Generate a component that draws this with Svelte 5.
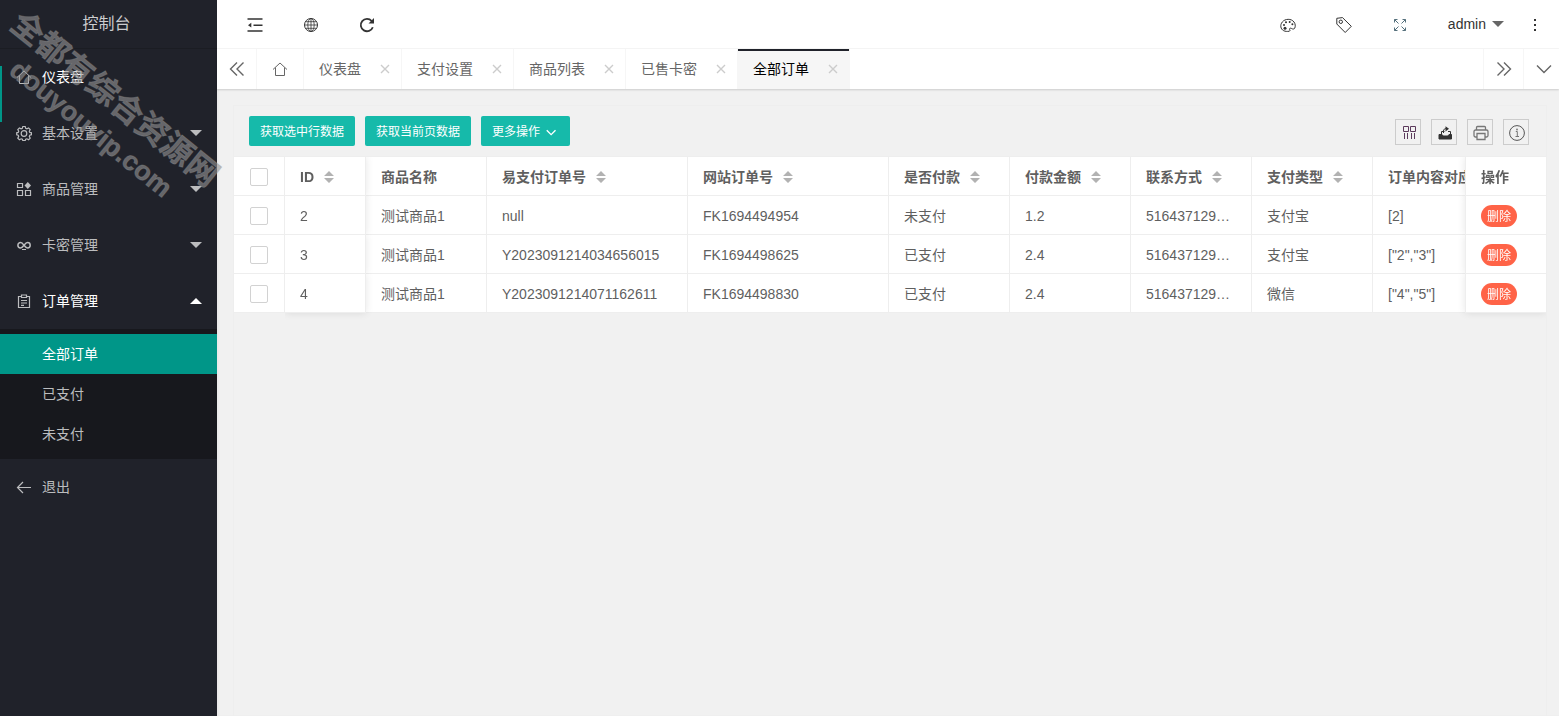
<script>
  // Navigation
  const menus = [
    { name: '仪表盘', icon: 'home', current: true },
    { name: '基本设置', icon: 'gear', more: true },
    { name: '商品管理', icon: 'apps', more: true },
    { name: '卡密管理', icon: 'link', more: true },
    { name: '订单管理', icon: 'form', more: true, children: ['全部订单', '已支付', '未支付'] },
    { name: '退出', icon: 'back' }
  ];

  const tabs = ['仪表盘', '支付设置', '商品列表', '已售卡密', '全部订单'];

  // Table
  const columns = [
    { title: '商品名称', key: 'goods' },
    { title: '易支付订单号', key: 'payNo', sort: true },
    { title: '网站订单号', key: 'siteNo', sort: true },
    { title: '是否付款', key: 'paid', sort: true },
    { title: '付款金额', key: 'amount', sort: true },
    { title: '联系方式', key: 'contact', sort: true },
    { title: '支付类型', key: 'type', sort: true },
    { title: '订单内容对应ID', key: 'content' }
  ];

  const orders = [
    { id: 2, goods: '测试商品1', payNo: 'null', siteNo: 'FK1694494954', paid: '未支付', amount: '1.2', contact: '516437129@qq.com', type: '支付宝', content: '[2]' },
    { id: 3, goods: '测试商品1', payNo: 'Y2023091214034656015', siteNo: 'FK1694498625', paid: '已支付', amount: '2.4', contact: '516437129@qq.com', type: '支付宝', content: '["2","3"]' },
    { id: 4, goods: '测试商品1', payNo: 'Y2023091214071162611', siteNo: 'FK1694498830', paid: '已支付', amount: '2.4', contact: '516437129@qq.com', type: '微信', content: '["4","5"]' }
  ];

  let activeTab = $state('全部订单');
  let activeChild = $state('全部订单');
  let checked = $state([]);

  function toggleAll(e) {
    checked = e.target.checked ? orders.map((o) => o.id) : [];
  }
</script>

{#snippet icon(name)}
  <svg class="icon" viewBox="0 0 16 16" fill="none" stroke="currentColor" aria-hidden="true">
    {#if name === 'home'}
      <path d="M1 8.500 8 2 15 8.500M3.500 6.500v8h9v-8" />
    {:else if name === 'gear'}
      <circle cx="8" cy="8.500" r="2.800" stroke-width="1.200" />
      <path d="M6.800 1.500h2.400l.5 1.800 1.200.5 1.700-.9 1.600 1.700-.9 1.600.5 1.200 1.700.4v1.900l-1.700.5-.5 1.200.9 1.700-1.600 1.600-1.700-.9-1.200.5-.5 1.200H6.800l-.5-1.200-1.200-.5-1.700.9-1.600-1.600.9-1.700-.5-1.200L.7 9.700V7.800l1.500-.4.5-1.200-.9-1.600 1.600-1.700 1.700.9 1.200-.5z" stroke-width="1.200" />
    {:else if name === 'apps'}
      <path d="M1.500 2.500h5v4h-5zM1.500 9.500h5v5h-5zM9.500 9.500h5v5h-5z" stroke-width="1.200" />
      <path d="M11.800 1 15 4.500 11.800 8 8.500 4.500z" fill="currentColor" stroke="none" />
    {:else if name === 'link'}
      <path d="M8 8.300C6.800 6.500 6 5.500 4.600 5.500a2.700 2.700 0 0 0 0 5.400c1.400 0 2.200-1 3.400-2.600s2-2.800 3.500-2.800a2.700 2.700 0 0 1 0 5.400c-1.500 0-2.300-1-3.500-2.600z" stroke-width="1.500" />
      <path d="M6 12.500h4" />
    {:else if name === 'form'}
      <path d="M5 3.500H2.500v11h11v-11H11M5.500 2h5v2.500h-5zM5 7.500h6M5 10h6M5 12.300h3" stroke-width="1.200" />
    {:else if name === 'back'}
      <path d="M15 8.500H1.500M7 3 1.500 8.500 7 14" stroke-width="1.200" />
    {:else if name === 'shrink'}
      <path d="M.5 2h15M6.500 8.200h9M.5 14h15" stroke-width="1.600" />
      <path d="M1 8.200 4.300 5.800v4.800z" fill="currentColor" stroke="none" />
    {:else if name === 'globe'}
      <circle cx="8" cy="8" r="6.500" />
      <ellipse cx="8" cy="8" rx="3.200" ry="6.500" stroke-width=".8" />
      <path d="M8 1.500v13M1.500 8h13M2.500 4.700h11M2.500 11.300h11" stroke-width=".8" />
    {:else if name === 'refresh'}
      <path d="M13.800 10.200A6.200 6.200 0 1 1 12.700 4" stroke-width="1.800" />
      <path d="M15 1v5.500H9.500z" fill="currentColor" stroke="none" />
    {:else if name === 'theme'}
      <path d="M3.700 13.700C.5 12.200-.2 8 2.300 5 5 1.600 11.300 1.300 14 5c1.500 2 1.500 4.300.8 6-.6 1.300-2 1.300-3.200.5-1.500-.9-2.800.2-1.800 1.400.4.600 0 1.300-.8 1.400-1.800.2-3.700.2-5.300-.6z" />
      <g fill="currentColor" stroke="none">
        <circle cx="4" cy="8" r="1" /><circle cx="6" cy="5.200" r="1" /><circle cx="9.700" cy="4.900" r="1" /><circle cx="12.400" cy="7.300" r="1" /><circle cx="5" cy="11.200" r="1.500" />
      </g>
    {:else if name === 'note'}
      <path d="M.8 1.300 6.500.6 15.300 9.300 9.200 15.500.8 7z" />
      <circle cx="4.800" cy="4.800" r="1.700" />
    {:else if name === 'full'}
      <path d="M2.500 5.500v-3h3M2.500 2.500l4 4M10.500 2.500h3v3M13.500 2.500l-4 4M2.500 10.500v3h3M2.500 13.500l4-4M10.500 13.500h3v-3M13.500 13.500l-4-4" stroke="#55707c" />
    {:else if name === 'dots'}
      <path d="M7 2h2v2H7zM7 7h2v2H7zM7 12h2v2H7z" fill="currentColor" stroke="none" />
    {:else if name === 'prev'}
      <path d="M8 1.500 1.500 8 8 14.500M14.500 1.500 8 8l6.500 6.500" stroke-width="1.400" />
    {:else if name === 'next'}
      <path d="M1.500 1.500 8 8l-6.500 6.500M8 1.500 14.500 8 8 14.500" stroke-width="1.400" />
    {:else if name === 'down'}
      <path d="m1 4.500 7 7 7-7" stroke-width="1.400" />
    {:else if name === 'more'}
      <path d="M2 6l5 5 5-5" stroke-width="1.600" />
    {:else if name === 'close'}
      <path d="m4 4 8 8M12 4l-8 8" stroke-width="1.400" />
    {:else if name === 'cols'}
      <path d="M2.500 1.500h5v5h-5zM9.500 1.500h5v5h-5zM3.500 8v6M6.500 8v6M10.500 8v6M13.500 8v6" stroke="#5c3a5c" />
    {:else if name === 'export'}
      <path d="M2 9.500h3l1 1.500h5l1-1.500h2.500V14H2z" fill="currentColor" />
      <path d="M4.500 9V6.500h3M11 6.500h2.500V10M6.500 8V6c0-1.500 1-2.500 3-2.500" />
      <path d="M8.500 1.200 12 3.800 8.500 6.400z" fill="currentColor" stroke="none" />
    {:else if name === 'print'}
      <g stroke="#777">
        <path d="M3.500 5V2.500c0-.6.4-1 1-1h7c.6 0 1 .4 1 1V5M4 12H2.500A1.500 1.500 0 0 1 1 10.500v-4A1.500 1.500 0 0 1 2.500 5h11A1.500 1.500 0 0 1 15 6.500v4a1.500 1.500 0 0 1-1.500 1.500H12M4 8.500h8v6H4z" stroke-width="1.300" />
      </g>
    {:else if name === 'info'}
      <circle cx="8" cy="8" r="7.400" stroke="#555" />
      <path d="M6.800 6.500h1.500V11M6.500 11.500h3.500" stroke="#777" />
      <circle cx="8" cy="4.500" r=".9" fill="#777" stroke="none" />
    {/if}
  </svg>
{/snippet}

<div class="layout">
  <aside class="side">
    <div class="logo">控制台</div>
    <nav>
      {#each menus as item}
        <a href="#menu" class="menu" class:light={item.current} class:open={item.children}>
          {@render icon(item.icon)}
          <span>{item.name}</span>
          {#if item.more}<i class="caret"></i>{/if}
        </a>
        {#if item.children}
          <div class="sub">
            {#each item.children as child}
              <a href="#orders" class:active={activeChild === child} onclick={() => (activeChild = child)}>{child}</a>
            {/each}
          </div>
        {/if}
      {/each}
      <span class="bar"></span>
    </nav>
  </aside>

  <div class="main">
    <header class="header">
      <button aria-label="侧边伸缩">{@render icon('shrink')}</button>
      <button aria-label="前台">{@render icon('globe')}</button>
      <button aria-label="刷新">{@render icon('refresh')}</button>
      <span class="space"></span>
      <button aria-label="主题">{@render icon('theme')}</button>
      <button aria-label="便签">{@render icon('note')}</button>
      <button aria-label="全屏">{@render icon('full')}</button>
      <button class="user">admin<i class="caret"></i></button>
      <button class="dots" aria-label="更多">{@render icon('dots')}</button>
    </header>

    <div class="tabs">
      <button class="ctrl" aria-label="向左">{@render icon('prev')}</button>
      <button class="tab-home" aria-label="主页">{@render icon('home')}</button>
      {#each tabs as tab}
        <div class="tab" class:active={activeTab === tab}>
          <button class="tab-name" onclick={() => (activeTab = tab)}>{tab}</button>
          <button class="tab-close" aria-label="关闭{tab}">{@render icon('close')}</button>
        </div>
      {/each}
      <span class="space"></span>
      <button class="ctrl right" aria-label="向右">{@render icon('next')}</button>
      <button class="ctrl right last" aria-label="标签操作">{@render icon('down')}</button>
    </div>

    <main class="content">
      <div class="card">
        <div class="toolbar">
          <button class="btn">获取选中行数据</button>
          <button class="btn">获取当前页数据</button>
          <button class="btn">更多操作 {@render icon('more')}</button>
          <span class="space"></span>
          <div class="tools">
            <button aria-label="筛选列">{@render icon('cols')}</button>
            <button aria-label="导出">{@render icon('export')}</button>
            <button aria-label="打印">{@render icon('print')}</button>
            <button aria-label="提示">{@render icon('info')}</button>
          </div>
        </div>

        <div class="table-box">
          <table>
            <colgroup>
              <col class="w-check" /><col class="w-id" /><col class="w-normal" /><col class="w-wide" /><col class="w-wide" />
              <col class="w-normal" /><col class="w-normal" /><col class="w-normal" /><col class="w-normal" /><col class="w-wide" /><col class="w-action" />
            </colgroup>
            <thead>
              <tr>
                <th class="check"><input type="checkbox" aria-label="全选" checked={checked.length === orders.length} onchange={toggleAll} /></th>
                <th class="id">ID<span class="sort"></span></th>
                {#each columns as col}
                  <th>{col.title}{#if col.sort}<span class="sort"></span>{/if}</th>
                {/each}
                <th class="action">操作</th>
              </tr>
            </thead>
            <tbody>
              {#each orders as order}
                <tr>
                  <td class="check"><input type="checkbox" aria-label="选择 {order.id}" value={order.id} bind:group={checked} /></td>
                  <td class="id">{order.id}</td>
                  {#each columns as col}
                    <td>{order[col.key]}</td>
                  {/each}
                  <td class="action"><button class="del">删除</button></td>
                </tr>
              {/each}
            </tbody>
          </table>
        </div>
      </div>
    </main>
  </div>

  <div class="watermark">全都有综合资源网<br /><span>douyouvip.com</span></div>
</div>

<style>
  :global(body) { background: #f1f1f1; }
  .layout { position: relative; display: flex; min-height: 100vh; overflow: hidden; font: 14px/24px "Liberation Sans", "Noto Sans CJK SC", sans-serif; color: #333; }
  button { margin: 0; padding: 0; border: none; background: none; font: inherit; color: inherit; cursor: pointer; }
  a { text-decoration: none; }
  .icon { display: block; flex: none; width: 16px; height: 16px; }
  .space { flex: 1; }
  .caret { width: 0; height: 0; border: 6px solid transparent; border-top-color: currentColor; border-bottom: none; }

  /* Sidebar */
  .side { flex: none; width: 217px; background: #20222a; color: #bcbdbf; }
  .logo { box-sizing: border-box; height: 49px; line-height: 48px; border-bottom: 1px solid #1b1d23; padding-right: 4px; text-align: center; font-size: 16px; color: #cccdcf; }
  nav { position: relative; }
  .menu { display: flex; align-items: center; height: 56px; padding: 0 15px 0 16px; color: #bcbdbf; }
  .menu .icon { margin-right: 10px; }
  .menu .caret { margin-left: auto; }
  .menu.light span, .menu.open span { color: #fff; }
  .menu.open .caret { border-top: none; border-bottom: 6px solid #fff; }
  .bar { position: absolute; left: 0; top: 17px; width: 2px; height: 56px; background: #009688; }
  .sub { padding: 5px 0; background: #17181d; }
  .sub a { display: block; height: 40px; line-height: 40px; padding-left: 42px; color: #bcbdbf; }
  .sub a.active { background: #009688; color: #fff; }

  /* Header and tabs */
  .main { flex: 1; min-width: 0; display: flex; flex-direction: column; }
  .header { display: flex; align-items: center; height: 48px; padding: 0 8px 0 10px; background: #fff; border-bottom: 1px solid #f6f6f6; }
  .header button { display: flex; align-items: center; height: 48px; padding: 0 20px; }
  .header .icon { margin-top: 2px; }
  .header .user { padding-right: 15px; gap: 6px; }
  .user .caret { color: #666; }
  .header .dots { padding: 0 8px; }
  .tabs { display: flex; height: 40px; background: #fff; color: #666; box-shadow: 0 1px 2px rgba(0, 0, 0, 0.15); }
  .ctrl { width: 40px; padding: 0 12px; border-right: 1px solid #f6f6f6; }
  .ctrl.right { border-right: none; border-left: 1px solid #f6f6f6; }
  .ctrl.last { width: 36px; padding-right: 7px; }
  .tab-home { padding: 0 15px; border-right: 1px solid #f6f6f6; }
  .tab { display: flex; align-items: center; border-right: 1px solid #f6f6f6; }
  .tab-name { height: 40px; padding-left: 15px; }
  .tab-close { margin: 0 8px 0 16px; color: #ccc; }
  .tab.active { background: #f6f6f6; color: #000; box-shadow: inset 0 2px #20222a; }

  /* Content */
  .content { flex: 1; display: flex; padding: 16px 12px 0 16px; box-shadow: inset 2px 0 2px rgba(0, 0, 0, 0.03); }
  .card { flex: 1; min-width: 0; border: 1px solid #eee; border-bottom: none; }
  .toolbar { display: flex; align-items: center; gap: 10px; height: 50px; padding: 0 17px 0 15px; }
  .btn { display: flex; align-items: center; gap: 5px; height: 30px; padding: 2px 11px 0; border-radius: 2px; background: #16baaa; color: #fff; font-size: 12px; }
  .btn .icon { width: 14px; height: 14px; }
  .tools { display: flex; gap: 10px; padding-top: 2px; }
  .tools button { width: 26px; height: 26px; padding: 2px 4px 0 5px; border: 1px solid #ccc; }

  .table-box { overflow: hidden; padding-bottom: 8px; color: #5f5f5f; }
  table { table-layout: fixed; width: 1421px; border-collapse: separate; border-spacing: 0; border-top: 1px solid #eee; }
  .w-check { width: 51px; }
  .w-id { width: 81px; }
  .w-normal { width: 121px; }
  .w-wide { width: 201px; }
  .w-action { width: 81px; }
  th, td { box-sizing: border-box; height: 39px; padding: 2px 14px 0 15px; background: #fff; border: solid #eee; border-width: 0 1px 1px 0; text-align: left; white-space: nowrap; overflow: hidden; text-overflow: ellipsis; }
  th { font-weight: 700; text-overflow: clip; }
  .check, .id, .action { position: sticky; z-index: 1; overflow: visible; }
  .check { left: 0; }
  .id { left: 51px; box-shadow: 0 0 8px rgba(0, 0, 0, 0.1); clip-path: inset(0 -8px 0 0); }
  .action { right: 0; border-width: 0 0 1px 1px; box-shadow: 0 0 8px rgba(0, 0, 0, 0.1); clip-path: inset(0 0 0 -8px); }
  tr:last-child .id { clip-path: inset(0 -8px -8px 0); }
  tr:last-child .action { clip-path: inset(0 0 -8px -8px); }
  input { display: block; appearance: none; box-sizing: border-box; width: 18px; height: 18px; margin: 0 0 0 1px; border: 1px solid #d2d2d2; border-radius: 2px; background: #fff; }
  input:checked { background: #16baaa; border-color: #16baaa; }
  .sort { display: inline-block; width: 10px; height: 12px; margin-left: 10px; vertical-align: -1px; background: #b2b2b2; clip-path: polygon(50% 0, 100% 42%, 0 42%, 0 58%, 100% 58%, 50% 100%, 0 58%, 0 42%); }
  .del { display: block; height: 22px; line-height: 24px; padding: 0 6px; border-radius: 11px; background: #ff6347; color: #fff; font-size: 12px; }

  .watermark { position: absolute; left: -25px; top: 77px; width: 256px; line-height: 36px; text-align: center; white-space: nowrap; font-size: 32px; font-weight: 700; color: rgba(150, 150, 150, 0.6); -webkit-text-stroke: 1px rgba(150, 150, 150, 0.3); transform: rotate(39deg); pointer-events: none; }
  .watermark span { font-size: 27px; }
</style>
